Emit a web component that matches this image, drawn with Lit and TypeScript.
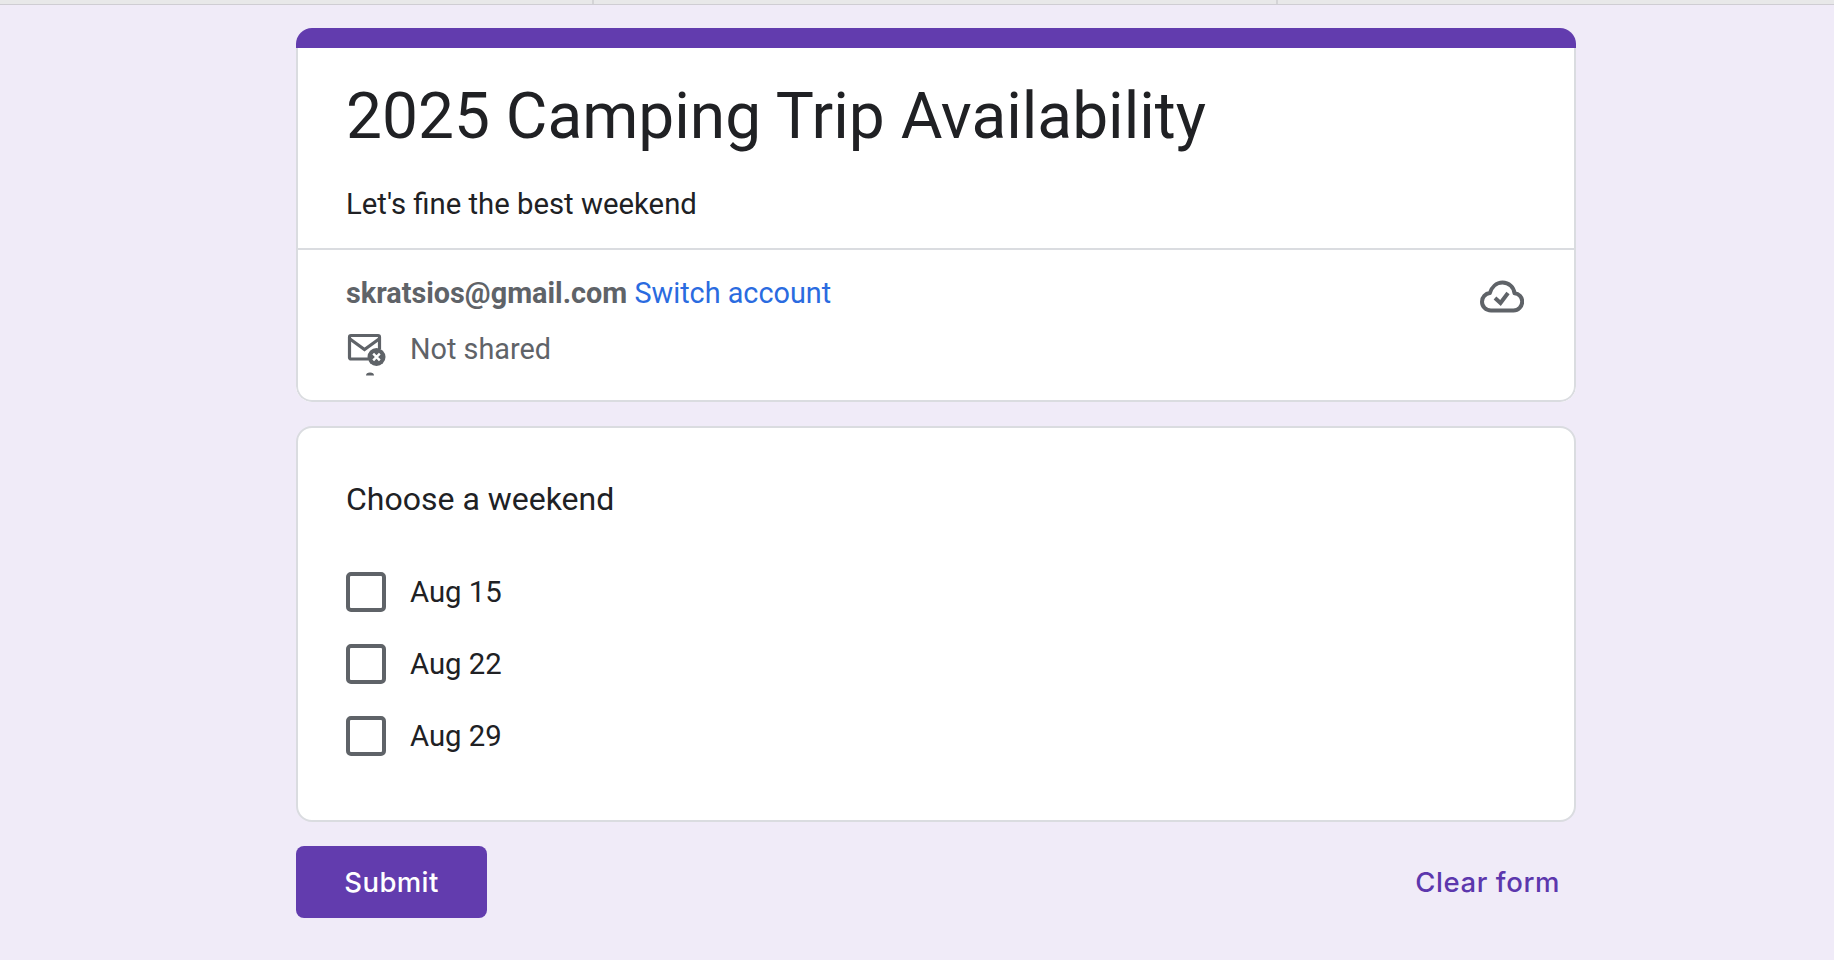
import { LitElement, html, css, svg } from "lit";
import { customElement } from "lit/decorators.js";

const mailIcon = svg`<svg class="mail" width="40" height="46" viewBox="0 0 40 46" fill="none">
  <path d="M22 28H5a1.500 1.500 0 0 1-1.500-1.500V6A1.500 1.500 0 0 1 5 4.500h27A1.500 1.500 0 0 1 33.500 6v12" stroke="#5f6368" stroke-width="3.200"/>
  <path d="M4 8 18.500 18.500 33 8" stroke="#5f6368" stroke-width="3.200"/>
  <circle cx="30.500" cy="26" r="9" fill="#5f6368"/>
  <path d="M27.200 22.700l6.600 6.600M33.800 22.700l-6.600 6.600" stroke="#fff" stroke-width="2.400"/>
  <path d="M20 44.500a4 3 0 0 1 8 0z" fill="#5f6368"/>
</svg>`;

const cloudIcon = svg`<svg width="44" height="34" viewBox="0 0 44 34" fill="none">
  <path d="M11 31.500C5.800 31.500 2 27.600 2 22.700c0-4.500 3.400-8.100 7.800-8.600C11.600 8.300 16.300 3.500 22.500 3.500c6.500 0 11.300 4.700 12 10.700 4.400.3 7.700 3.900 7.700 8.400 0 5-3.900 8.900-8.700 8.900z" stroke="#5f6368" stroke-width="4" stroke-linejoin="round"/>
  <path d="M15 19l5.500 5L28 14" stroke="#5f6368" stroke-width="4"/>
</svg>`;

@customElement("app-root")
export class AppRoot extends LitElement {
  static styles = css`
    :host {
      display: block;
      height: 960px;
      overflow: hidden;
      background: #f0ebf8;
      font-family: Roboto, "Liberation Sans", sans-serif;
      color: #202124;
    }
    .strip {
      display: grid;
      grid-template-columns: 592px 684px 1fr;
      height: 4px;
      background: #e8e8e9;
      border-bottom: 1px solid #cfcdd3;
    }
    .strip div + div { border-left: 2px solid #d4d4d6; }
    .page {
      width: 1280px;
      margin: 23px auto 0 296px;
      display: flex;
      flex-direction: column;
      gap: 24px;
    }
    .card {
      background: #fff;
      border: 2px solid #dadce0;
      border-radius: 16px;
      box-sizing: border-box;
    }
    .head { background: #fff; border-radius: 16px; overflow: hidden; }
    .bar { height: 20px; background: #623cae; }
    .panel {
      border: 2px solid #dadce0;
      border-top: 0;
      border-radius: 0 0 16px 16px;
      background: #fff;
    }
    .intro {
      height: 202px;
      box-sizing: border-box;
      padding: 29px 48px 0;
      border-bottom: 2px solid #dadce0;
    }
    h1 {
      margin: 0;
      font-size: 64px;
      line-height: 80px;
      font-weight: 400;
    }
    .desc { margin-top: 27px; font-size: 29.300px; line-height: 40px; }
    .account {
      height: 150px;
      box-sizing: border-box;
      padding: 23px 48px 0;
      display: flex;
      justify-content: space-between;
      color: #5f6368;
      font-size: 28.800px;
    }
    .who { line-height: 40px; }
    .who b { font-weight: 700; }
    .who a { color: #2a6be0; }
    .shared {
      display: flex;
      align-items: flex-start;
      gap: 24px;
      height: 46px;
      margin-top: 18px;
    }
    .shared span { line-height: 36px; }
    .mail { flex: none; }
    .cloud { margin-top: 6px; margin-right: 2px; flex: none; }
    .question { height: 396px; padding: 51px 48px 0; box-sizing: border-box; }
    .qtitle { font-size: 32px; line-height: 40px; }
    .options {
      margin-top: 53px;
      display: flex;
      flex-direction: column;
      gap: 32px;
    }
    .option {
      display: flex;
      align-items: center;
      gap: 24px;
      font-size: 29.300px;
      line-height: 40px;
      height: 40px;
    }
    .check {
      width: 40px;
      height: 40px;
      box-sizing: border-box;
      border: 4px solid #5f6368;
      border-radius: 5px;
      flex: none;
    }
    .actions {
      display: flex;
      justify-content: space-between;
      align-items: center;
    }
    .submit {
      width: 191px;
      height: 72px;
      border: 0;
      border-radius: 8px;
      background: #623cae;
      color: #fff;
      font: 450 27.500px/1 Inter, Roboto, sans-serif;
      letter-spacing: 0.4px;
      padding: 2px 0 0;
    }
    .clear {
      color: #5c37ad;
      font: 450 27.500px/1 Inter, Roboto, sans-serif;
      letter-spacing: 0.6px;
      margin-right: 16px;
      padding-top: 2px;
    }
  `;

  render() {
    const dates = ["Aug 15", "Aug 22", "Aug 29"];
    return html`
      <div class="strip"><div></div><div></div><div></div></div>
      <div class="page">
        <section class="head">
          <div class="bar"></div>
          <div class="panel">
            <div class="intro">
              <h1>2025 Camping Trip Availability</h1>
              <div class="desc">Let's fine the best weekend</div>
            </div>
            <div class="account">
              <div>
                <div class="who"><b>skratsios@gmail.com</b> <a>Switch account</a></div>
                <div class="shared">${mailIcon}<span>Not shared</span></div>
              </div>
              <div class="cloud">${cloudIcon}</div>
            </div>
          </div>
        </section>
        <section class="card question">
          <div class="qtitle">Choose a weekend</div>
          <div class="options">
            ${dates.map(
              (d) => html`<div class="option"><div class="check"></div><span>${d}</span></div>`
            )}
          </div>
        </section>
        <div class="actions">
          <button class="submit">Submit</button>
          <span class="clear">Clear form</span>
        </div>
      </div>
    `;
  }
}
